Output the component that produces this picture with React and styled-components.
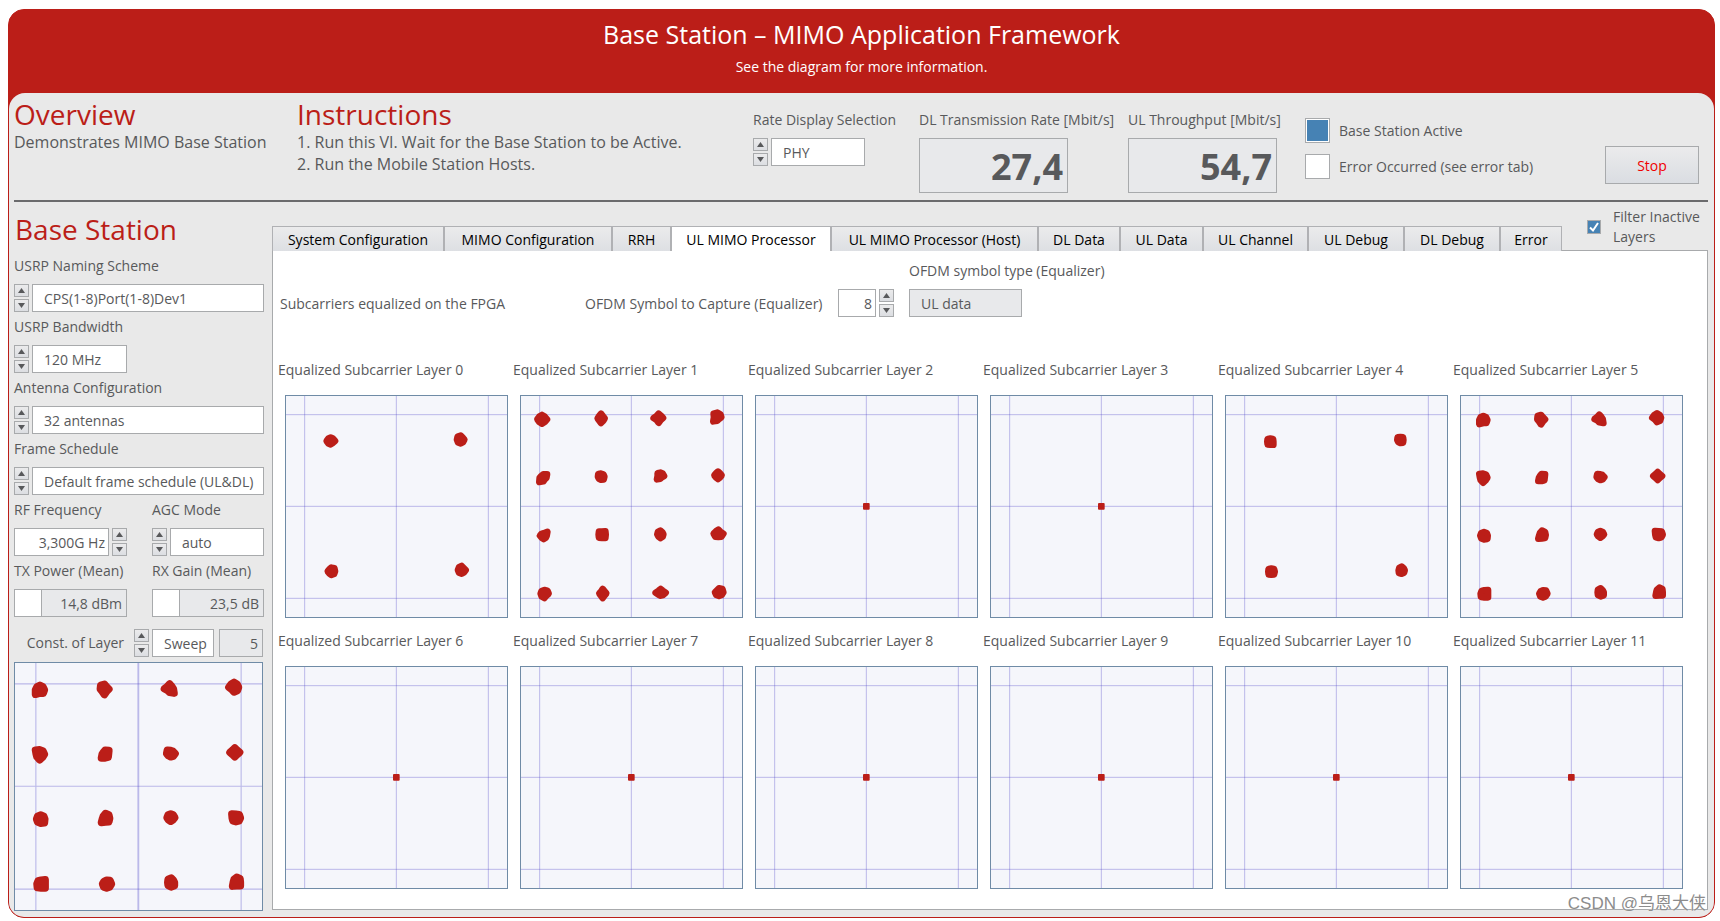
import React, { useState } from "react";
import styled, { createGlobalStyle } from "styled-components";

const GlobalStyle = createGlobalStyle`
  * {
    box-sizing: border-box;
  }

  body {
    margin: 0;
    padding: 9px 5px 5px 8px;
    background: #ffffff;
    color: #58595b;
    font-family: "Open Sans", "Noto Sans", sans-serif;
    font-size: 14px;
    line-height: 20px;
  }

  button, input, select {
    font: inherit;
    color: inherit;
    margin: 0;
    border-radius: 0;
  }
`;

const Frame = styled.div`
  position: relative;
  border: 1px solid #bb1e18;
  border-radius: 16px;
  background: #bb1e18;
`;

const Header = styled.header`
  padding: 8px 0 15px;
  text-align: center;
  color: #ffffff;
`;

const Title = styled.h1`
  margin: 0 0 6px;
  font-size: 25px;
  font-weight: 400;
  line-height: 32px;
`;

const Subtitle = styled.p`
  margin: 0;
  line-height: 22px;
`;

const Body = styled.div`
  padding: 0 6px 6px 5px;
  border-radius: 16px 16px 15px 15px;
  background: #e9e9e9;
`;

const TopBar = styled.section`
  display: flex;
  align-items: flex-start;
  height: 109px;
  padding-right: 9px;
  border-bottom: 2px solid #6b6b6d;
`;

const Intro = styled.div`
  flex: ${(props) => (props.$grow ? "1" : "0 0 283px")};
  padding-top: 4px;
  font-size: 16px;
  line-height: 22px;
  white-space: nowrap;

  p {
    margin: 0;
  }
`;

const Heading = styled.h2`
  margin: 0;
  font-size: 28px;
  font-weight: 400;
  line-height: 34px;
  color: #bb1e18;
`;

const Field = styled.div`
  display: flex;
  flex-direction: column;
  align-items: flex-start;
  flex: 0 0 auto;
  gap: 8px;
  width: ${(props) => props.$width || "auto"};
  white-space: nowrap;
`;

const TopField = styled(Field)`
  padding-top: 17px;
`;

const ControlRow = styled.div`
  display: flex;
  gap: 3px;
  width: ${(props) => props.$width || "auto"};
`;

const Spinner = styled.div`
  display: flex;
  flex: none;
  flex-direction: column;
  gap: 2px;
  width: 15px;
  height: 28px;
`;

const SpinButton = styled.button`
  display: flex;
  flex: 1;
  align-items: center;
  justify-content: center;
  padding: 0;
  border: 1px solid #a8aaac;
  background: linear-gradient(#ebebec, #dcdee2);
`;

const Select = styled.select`
  flex: 1;
  min-width: 0;
  height: 28px;
  padding: 1px 0 0 11px;
  border: 1px solid #a8aaac;
  background: #ffffff;
  appearance: none;
`;

const NumberInput = styled.input`
  flex: 1;
  min-width: 0;
  width: 37px;
  height: 28px;
  padding: 1px 3px 0 0;
  border: 1px solid #a8aaac;
  background: #ffffff;
  text-align: right;
`;

const Rate = styled.output`
  width: 149px;
  height: 55px;
  padding-right: 4px;
  border: 1px solid #a8aaac;
  background: #e8e9eb;
  font-size: 36px;
  font-weight: 700;
  line-height: 56px;
  text-align: right;
`;

const Readout = styled.output`
  width: ${(props) => props.$width || "100%"};
  height: 28px;
  padding: 0 11px;
  padding-right: ${(props) => (props.$right ? "4px" : "11px")};
  border: 1px solid #a8aaac;
  background: #e8e9eb;
  line-height: 28px;
  text-align: ${(props) => (props.$right ? "right" : "left")};
`;

const Meter = styled.div`
  display: flex;
  width: 100%;
  height: 28px;
  border: 1px solid #a8aaac;
  background: #ffffff;

  output {
    flex: 1;
    margin-left: 26px;
    padding-right: 4px;
    border-left: 1px solid #a8aaac;
    background: #e8e9eb;
    line-height: 28px;
    text-align: right;
  }
`;

const Indicators = styled.div`
  display: flex;
  flex: 0 0 300px;
  flex-direction: column;
  gap: 11px;
  padding-top: 25px;
`;

const Indicator = styled.label`
  display: flex;
  align-items: center;
  gap: 9px;
  height: 25px;
`;

const Led = styled.input`
  appearance: none;
  width: 25px;
  height: 25px;
  border: 1px solid #a8aaac;
  background: #ffffff;

  &:checked {
    background: #4682b4;
    box-shadow: inset 0 0 0 1px #ffffff;
  }
`;

const StopButton = styled.button`
  flex: 0 0 94px;
  height: 38px;
  margin-top: 53px;
  padding-top: 2px;
  border: 1px solid #a8aaac;
  background: linear-gradient(#ebebec, #dadde2);
  color: #f00000;
`;

const Main = styled.main`
  display: grid;
  grid-template-columns: 250px 1fr;
  gap: 8px;
`;

const Sidebar = styled.aside`
  display: flex;
  flex-direction: column;
  gap: 5px;
  padding-top: 10px;
`;

const SidebarHeading = styled(Heading)`
  padding-left: 1px;
  margin-bottom: 5px;
`;

const Pair = styled.div`
  display: grid;
  grid-template-columns: 113px 112px;
  gap: 25px;
`;

const LayerRow = styled.div`
  display: flex;
  align-items: center;
  justify-content: flex-end;
  gap: 5px;
  margin-top: 7px;
  padding-right: 1px;
`;

const LayerLabel = styled.label`
  margin-right: 5px;
`;

const SidePlot = styled.div`
  padding-right: 1px;
`;

const TabRow = styled.div`
  display: flex;
  align-items: flex-end;
  height: 49px;
`;

const Tab = styled.button`
  flex: 0 0 ${(props) => props.$width}px;
  height: 25px;
  padding: 2px 0 0;
  border: 1px solid #b0b1b4;
  border-bottom: 0;
  background: ${(props) =>
    props.$active ? "#ffffff" : "linear-gradient(#ebebec, #dddfe3)"};
  color: #000000;
  white-space: nowrap;
`;

const FilterArea = styled.div`
  display: flex;
  flex: 1;
  justify-content: flex-end;
  height: 49px;
  padding-top: 5px;
  border-bottom: 1px solid #a8aaac;
`;

const FilterLabel = styled.label`
  display: flex;
  align-items: center;
  gap: 12px;
  width: 121px;
  height: 40px;
`;

const CheckMark = styled.span`
  display: grid;
  flex: none;
  width: 14px;
  height: 14px;

  input,
  svg {
    grid-area: 1 / 1;
    width: 14px;
    height: 14px;
  }

  input {
    appearance: none;
    border: 1px solid #a8aaac;
    background: #ffffff;
  }

  input:checked {
    background: #4682b4;
  }

  input:not(:checked) + svg {
    display: none;
  }

  svg {
    pointer-events: none;
  }
`;

const Panel = styled.section`
  padding: 10px 24px 20px 5px;
  border: 1px solid #a8aaac;
  border-top: 0;
  background: #ffffff;
`;

const CaptureRow = styled.div`
  display: flex;
  align-items: flex-end;
  padding-left: 2px;
  line-height: 26px;
  white-space: nowrap;
`;

const CaptureNote = styled.span`
  flex: 0 0 305px;
`;

const CaptureLabel = styled.label`
  flex: 0 0 253px;
`;

const SymbolType = styled(Field)`
  margin-left: 15px;
  line-height: 20px;
`;

const PlotGrid = styled.div`
  display: grid;
  grid-template-columns: repeat(6, 1fr);
  gap: 13px 5px;
  margin-top: 43px;
`;

const PlotCell = styled.figure`
  margin: 0;
  padding-left: 7px;

  figcaption {
    margin: 0 0 15px -7px;
    white-space: nowrap;
  }
`;

const PlotSvg = styled.svg`
  display: block;
  width: 100%;
  border: 1px solid #6f8ba6;
  background: #f5f6fb;
`;

const Watermark = styled.div`
  position: absolute;
  right: 8px;
  bottom: 2px;
  color: #8c8c8c;
  font-family: "Liberation Sans", "Noto Sans CJK SC", sans-serif;
  font-size: 17px;
  line-height: 22px;
  text-shadow: 0 0 1px #ffffff;
`;

// Clusters: centre x, centre y, then the radius at every 45 degrees from east, clockwise.
const QPSK_A = [
  [134, 135, 22, 17, 19, 19, 21, 19, 19, 19],
  [524, 131, 20, 19, 20, 21, 20, 22, 21, 18],
  [136, 526, 20, 20, 20, 17, 20, 17, 20, 22],
  [527, 522, 21, 19, 20, 20, 20, 20, 21, 18],
];

const QPSK_B = [
  [133, 137, 18, 22, 18, 21, 18, 20, 18, 20],
  [523, 132, 18, 20, 18, 18, 18, 21, 18, 20],
  [136, 527, 19, 21, 18, 20, 18, 21, 18, 20],
  [527, 523, 18, 19, 19, 20, 18, 19, 20, 18],
];

const QAM_A = [
  [63, 70, 24, 21, 22, 20, 23, 20, 22, 21],
  [240, 67, 20, 19, 23, 17, 19, 18, 23, 17],
  [413, 66, 22, 18, 23, 18, 24, 17, 22, 19],
  [589, 64, 21, 16, 19, 26, 19, 25, 23, 22],
  [67, 246, 18, 15, 19, 26, 20, 18, 20, 25],
  [240, 242, 19, 20, 18, 18, 18, 21, 18, 19],
  [418, 240, 20, 15, 17, 23, 17, 21, 19, 19],
  [591, 238, 20, 18, 20, 18, 20, 18, 20, 18],
  [68, 419, 18, 18, 19, 18, 20, 17, 16, 24],
  [243, 416, 20, 23, 19, 22, 19, 22, 18, 23],
  [418, 415, 18, 19, 20, 18, 18, 19, 20, 18],
  [592, 413, 24, 22, 19, 22, 23, 19, 21, 18],
  [70, 593, 22, 18, 22, 21, 20, 20, 20, 22],
  [245, 592, 20, 18, 23, 18, 19, 16, 22, 17],
  [419, 590, 24, 19, 18, 18, 24, 18, 20, 18],
  [594, 589, 22, 20, 20, 21, 21, 18, 21, 23],
];

const QAM_B = [
  [67, 72, 21, 22, 18, 26, 21, 20, 21, 21],
  [240, 70, 21, 18, 24, 17, 20, 23, 22, 18],
  [415, 69, 19, 26, 19, 16, 23, 18, 22, 18],
  [588, 65, 21, 22, 22, 17, 23, 21, 22, 20],
  [66, 245, 22, 20, 24, 19, 18, 24, 21, 22],
  [242, 245, 18, 20, 19, 23, 17, 16, 20, 23],
  [418, 243, 21, 19, 18, 17, 20, 22, 17, 17],
  [590, 240, 22, 18, 21, 18, 22, 17, 21, 18],
  [69, 419, 20, 23, 20, 21, 20, 20, 20, 20],
  [243, 417, 20, 22, 19, 24, 17, 18, 22, 22],
  [418, 415, 20, 18, 19, 18, 19, 19, 19, 19],
  [593, 416, 21, 20, 19, 20, 19, 24, 19, 22],
  [70, 593, 20, 25, 20, 23, 20, 21, 19, 24],
  [246, 593, 22, 20, 20, 21, 20, 19, 19, 22],
  [419, 589, 18, 22, 21, 20, 18, 21, 21, 18],
  [595, 588, 19, 23, 19, 25, 18, 19, 22, 22],
];

const LAYERS = [
  QPSK_A,
  QAM_A,
  null,
  null,
  QPSK_B,
  QAM_B,
  null,
  null,
  null,
  null,
  null,
  null,
];

const TABS = [
  ["System Configuration", 172],
  ["MIMO Configuration", 168],
  ["RRH", 59],
  ["UL MIMO Processor", 160],
  ["UL MIMO Processor (Host)", 207],
  ["DL Data", 82],
  ["UL Data", 83],
  ["UL Channel", 105],
  ["UL Debug", 96],
  ["DL Debug", 96],
  ["Error", 62],
];

// The outline is drawn inside the radii so that the wide round stroke fills them out.
const clusterPoints = ([cx, cy, ...radii]) =>
  radii
    .map((r, i) => {
      const angle = (i * Math.PI) / 4;
      const inner = r - 9;
      return `${Math.round(cx + inner * Math.cos(angle))},${Math.round(
        cy + inner * Math.sin(angle)
      )}`;
    })
    .join(" ");

function Plot({ clusters, label, wide }) {
  return (
    <PlotSvg viewBox="0 0 663 663" role="img" aria-label={label}>
      <g stroke="#5048c8" strokeOpacity="0.35" strokeWidth="3">
        <path d="M56 0V663M607 0V663M0 56H663M0 331H663M0 607H663" />
        <path d="M331 0V663" strokeWidth={wide ? 5 : 3} />
      </g>
      {clusters ? (
        <g
          fill="#bb1e18"
          stroke="#bb1e18"
          strokeWidth="20"
          strokeLinejoin="round"
        >
          {clusters.map((c) => (
            <polygon key={`${c[0]}-${c[1]}`} points={clusterPoints(c)} />
          ))}
        </g>
      ) : (
        <rect x="321" y="321" width="20" height="20" rx="3" fill="#bb1e18" />
      )}
    </PlotSvg>
  );
}

function Spin({ name, onStep }) {
  return (
    <Spinner>
      <SpinButton aria-label={`${name} up`} onClick={() => onStep?.(1)}>
        <svg width="7" height="5" viewBox="0 0 7 5">
          <path d="M3.5 0L7 5H0Z" fill="#58595b" />
        </svg>
      </SpinButton>
      <SpinButton aria-label={`${name} down`} onClick={() => onStep?.(-1)}>
        <svg width="7" height="5" viewBox="0 0 7 5">
          <path d="M0 0H7L3.5 5Z" fill="#58595b" />
        </svg>
      </SpinButton>
    </Spinner>
  );
}

function EnumField({ id, label, value, width, as: Wrapper = Field, outer }) {
  return (
    <Wrapper $width={outer}>
      <label htmlFor={id}>{label}</label>
      <ControlRow $width={width}>
        <Spin name={label} />
        <Select id={id} defaultValue={value}>
          <option>{value}</option>
        </Select>
      </ControlRow>
    </Wrapper>
  );
}

function MeterField({ id, label, value }) {
  return (
    <Field>
      <label htmlFor={id}>{label}</label>
      <Meter>
        <output id={id}>{value}</output>
      </Meter>
    </Field>
  );
}

function App() {
  const [tab, setTab] = useState("UL MIMO Processor");
  const [symbol, setSymbol] = useState(8);

  return (
    <>
      <GlobalStyle />
      <Frame>
        <Header>
          <Title>Base Station – MIMO Application Framework</Title>
          <Subtitle>See the diagram for more information.</Subtitle>
        </Header>
        <Body>
          <TopBar>
            <Intro>
              <Heading>Overview</Heading>
              <p>Demonstrates MIMO Base Station</p>
            </Intro>
            <Intro $grow>
              <Heading>Instructions</Heading>
              <p>1. Run this VI. Wait for the Base Station to be Active.</p>
              <p>2. Run the Mobile Station Hosts.</p>
            </Intro>
            <EnumField
              as={TopField}
              id="rate-display"
              label="Rate Display Selection"
              value="PHY"
              width="112px"
              outer="166px"
            />
            <TopField $width="209px">
              <label htmlFor="dl-rate">DL Transmission Rate [Mbit/s]</label>
              <Rate id="dl-rate">27,4</Rate>
            </TopField>
            <TopField $width="177px">
              <label htmlFor="ul-rate">UL Throughput [Mbit/s]</label>
              <Rate id="ul-rate">54,7</Rate>
            </TopField>
            <Indicators>
              <Indicator>
                <Led type="checkbox" checked readOnly />
                Base Station Active
              </Indicator>
              <Indicator>
                <Led type="checkbox" checked={false} readOnly />
                Error Occurred (see error tab)
              </Indicator>
            </Indicators>
            <StopButton>Stop</StopButton>
          </TopBar>
          <Main>
            <Sidebar>
              <SidebarHeading>Base Station</SidebarHeading>
              <EnumField
                id="naming"
                label="USRP Naming Scheme"
                value="CPS(1-8)Port(1-8)Dev1"
                width="250px"
              />
              <EnumField
                id="bandwidth"
                label="USRP Bandwidth"
                value="120 MHz"
                width="113px"
              />
              <EnumField
                id="antennas"
                label="Antenna Configuration"
                value="32 antennas"
                width="250px"
              />
              <EnumField
                id="schedule"
                label="Frame Schedule"
                value="Default frame schedule (UL&DL)"
                width="250px"
              />
              <Pair>
                <Field>
                  <label htmlFor="rf">RF Frequency</label>
                  <ControlRow $width="113px">
                    <NumberInput id="rf" defaultValue="3,300G Hz" />
                    <Spin name="RF Frequency" />
                  </ControlRow>
                </Field>
                <EnumField
                  id="agc"
                  label="AGC Mode"
                  value="auto"
                  width="112px"
                />
              </Pair>
              <Pair>
                <MeterField
                  id="tx"
                  label="TX Power (Mean)"
                  value="14,8 dBm"
                />
                <MeterField id="rx" label="RX Gain (Mean)" value="23,5 dB" />
              </Pair>
              <LayerRow>
                <LayerLabel htmlFor="layer">Const. of Layer</LayerLabel>
                <ControlRow $width="80px">
                  <Spin name="Layer" />
                  <Select id="layer" defaultValue="Sweep">
                    <option>Sweep</option>
                  </Select>
                </ControlRow>
                <Readout $width="44px" $right>
                  5
                </Readout>
              </LayerRow>
              <SidePlot>
                <Plot clusters={QAM_B} label="Constellation of layer 5" wide />
              </SidePlot>
            </Sidebar>
            <div>
              <TabRow>
                {TABS.map(([name, width]) => (
                  <Tab
                    key={name}
                    $width={width}
                    $active={name === tab}
                    onClick={() => setTab(name)}
                  >
                    {name}
                  </Tab>
                ))}
                <FilterArea>
                  <FilterLabel>
                    <CheckMark>
                      <input type="checkbox" defaultChecked />
                      <svg viewBox="0 0 14 14">
                        <path
                          d="M3 7.5L6 10.5L11 3"
                          fill="none"
                          stroke="#ffffff"
                          strokeWidth="2"
                        />
                      </svg>
                    </CheckMark>
                    <span>Filter Inactive Layers</span>
                  </FilterLabel>
                </FilterArea>
              </TabRow>
              <Panel>
                <CaptureRow>
                  <CaptureNote>Subcarriers equalized on the FPGA</CaptureNote>
                  <CaptureLabel htmlFor="symbol">
                    OFDM Symbol to Capture (Equalizer)
                  </CaptureLabel>
                  <ControlRow $width="56px">
                    <NumberInput
                      id="symbol"
                      value={symbol}
                      onChange={(e) => setSymbol(Number(e.target.value) || 0)}
                    />
                    <Spin
                      name="OFDM Symbol"
                      onStep={(step) => setSymbol(symbol + step)}
                    />
                  </ControlRow>
                  <SymbolType>
                    <label htmlFor="symbol-type">
                      OFDM symbol type (Equalizer)
                    </label>
                    <Readout id="symbol-type" $width="113px">
                      UL data
                    </Readout>
                  </SymbolType>
                </CaptureRow>
                <PlotGrid>
                  {LAYERS.map((clusters, i) => (
                    <PlotCell key={i}>
                      <figcaption>Equalized Subcarrier Layer {i}</figcaption>
                      <Plot
                        clusters={clusters}
                        label={`Equalized subcarriers, layer ${i}`}
                      />
                    </PlotCell>
                  ))}
                </PlotGrid>
              </Panel>
            </div>
          </Main>
        </Body>
        <Watermark>CSDN @乌恩大侠</Watermark>
      </Frame>
    </>
  );
}

export default App;
